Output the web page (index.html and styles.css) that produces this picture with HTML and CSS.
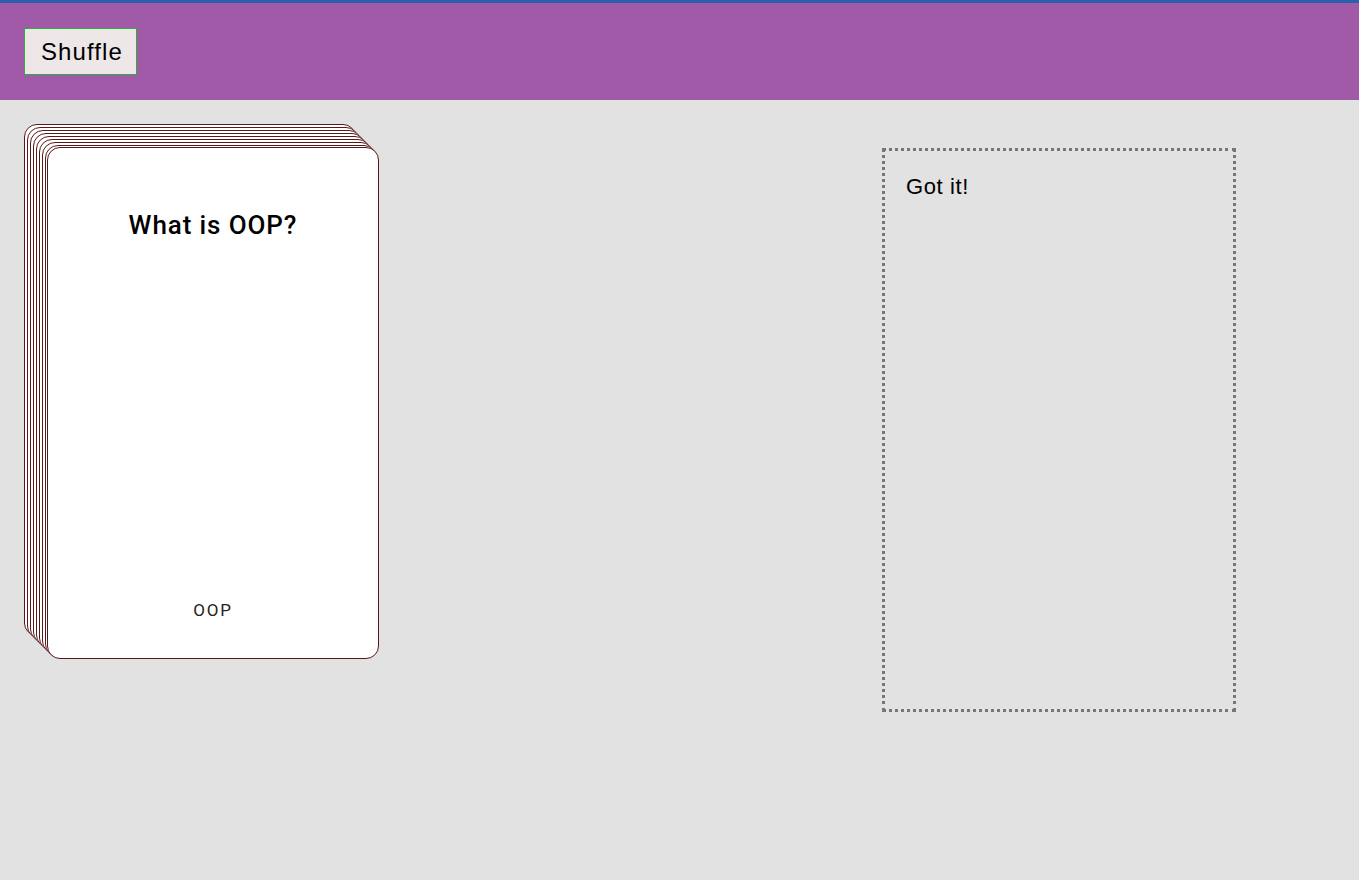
FILE: index.html
```html
<!DOCTYPE html>
<html>
<head>
<meta charset="utf-8">
<link rel="stylesheet" href="styles.css">
</head>
<body>
<header class="topbar">
  <button class="shuffle">Shuffle</button>
</header>
<main class="board">
  <div class="deck">
    <div class="card back" style="left:0px;top:0px"></div>
    <div class="card back" style="left:3px;top:3px"></div>
    <div class="card back" style="left:6px;top:6px"></div>
    <div class="card back" style="left:9px;top:9px"></div>
    <div class="card back" style="left:12px;top:12px"></div>
    <div class="card back" style="left:15px;top:15px"></div>
    <div class="card back" style="left:18px;top:18px"></div>
    <div class="card back" style="left:21px;top:21px"></div>
    <div class="card front" style="left:23px;top:23px">
      <h2 class="question">What is OOP?</h2>
      <div class="tag">OOP</div>
    </div>
  </div>
  <section class="dropzone">Got it!</section>
</main>
</body>
</html>
```

FILE: styles.css
```css
html, body {
  margin: 0;
  padding: 0;
}
body {
  background: #e2e2e2;
  font-family: "Liberation Sans", Arial, sans-serif;
  height: 880px;
}
.topbar {
  box-sizing: border-box;
  height: 100px;
  background: #a05aa8;
  border-top: 3px solid #2860ac;
  padding: 25px 24px 0;
}
.shuffle {
  font-family: "Liberation Sans", Arial, sans-serif;
  font-size: 24px;
  line-height: 27px;
  letter-spacing: 1.1px;
  padding: 9px 13px 9px 16px;
  background: #ede7e7;
  border: 1px solid #2eae3e;
  color: #000;
  border-radius: 0;
  margin: 0;
}
.board {
  display: flex;
  align-items: flex-start;
  padding: 24px 24px 0;
}
.deck {
  position: relative;
  width: 356px;
  height: 536px;
  flex: none;
}
.card {
  position: absolute;
  box-sizing: border-box;
  width: 332px;
  height: 512px;
  border: 1px solid #581818;
  border-radius: 13px;
  background: #fff;
}
.front {
  display: flex;
  flex-direction: column;
  align-items: center;
  justify-content: space-between;
  padding: 61px 0 38px;
  font-family: Roboto, "Noto Sans", sans-serif;
}
.question {
  margin: 0;
  font-size: 26px;
  font-weight: 500;
  letter-spacing: 0.9px;
  line-height: 32px;
  color: #000;
}
.tag {
  font-size: 17px;
  letter-spacing: 1.8px;
  color: #222;
  font-weight: 400;
}
.dropzone {
  box-sizing: border-box;
  margin-left: 502px;
  margin-top: 24px;
  width: 354px;
  height: 564px;
  border: 3px dotted #767676;
  padding: 24px 21px;
  font-size: 22px;
  letter-spacing: 0.6px;
  line-height: 24px;
  color: #000;
}
```
